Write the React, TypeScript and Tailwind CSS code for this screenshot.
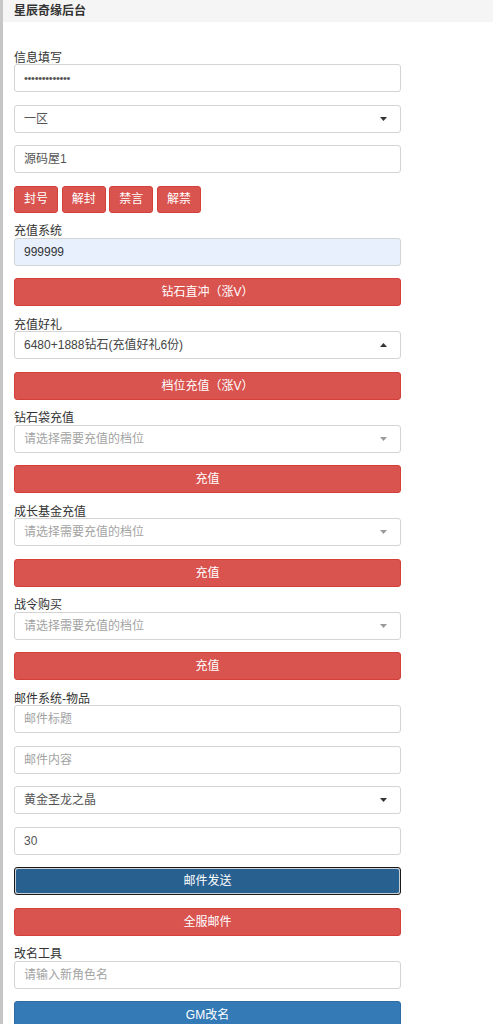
import React from "react";

const FONT = "font-['Liberation_Sans','Noto_Sans_CJK_SC',sans-serif]";

function Label({ children }: { children: React.ReactNode }) {
  return (
    <div className="mt-[12.5px] h-[12.5px] text-[12px] leading-[12px] text-[#333] whitespace-nowrap">
      {children}
    </div>
  );
}

function Field({
  children,
  muted,
  autofill,
}: {
  children: React.ReactNode;
  muted?: boolean;
  autofill?: boolean;
}) {
  return (
    <div
      className={`mt-[12.5px] first:mt-0 h-[28px] rounded-[3px] border border-[#d4d4d4] px-[9px] flex items-center text-[12px] ${
        autofill ? "bg-[#e8f0fe]" : "bg-white"
      } ${muted ? "text-[#a3a3a3]" : "text-[#555]"}`}
    >
      {children}
    </div>
  );
}

function Caret({ up, muted }: { up?: boolean; muted?: boolean }) {
  return (
    <svg width="7" height="4" viewBox="0 0 7 4" className="ml-auto mr-[4px]">
      <path
        d={up ? "M0 4 L3.5 0 L7 4 Z" : "M0 0 L7 0 L3.5 4 Z"}
        fill={muted ? "#9a9a9a" : "#333"}
      />
    </svg>
  );
}

function Select({
  text,
  muted,
  up,
}: {
  text: string;
  muted?: boolean;
  up?: boolean;
}) {
  return (
    <Field muted={muted}>
      <span>{text}</span>
      <Caret up={up} muted={muted} />
    </Field>
  );
}

function RedButton({ children }: { children: React.ReactNode }) {
  return (
    <div className="mt-[12.5px] h-[28px] rounded-[3px] bg-[#d9534f] border border-[#d43f3a] flex items-center justify-center text-white text-[12px]">
      {children}
    </div>
  );
}

export default function App() {
  return (
    <div className={`${FONT} min-h-[1024px] bg-white border-l-[3px] border-[#c6c6c6]`}>
      <div className="h-[22px] bg-[#f5f5f5] pl-[11px] flex items-center text-[12px] font-bold text-[#333]">
        星辰奇缘后台
      </div>
      <div className="pl-[11px] pt-[17px] w-[398px] flex flex-col">
        <Label>信息填写</Label>
        <div className="mt-0 h-[28px] rounded-[3px] border border-[#d4d4d4] px-[9px] flex items-center text-[11px] text-[#555] tracking-[-0.3px]">
          •••••••••••••
        </div>
        <Select text="一区" />
        <Field>源码屋1</Field>
        <div className="mt-[12.5px] flex gap-[3.67px]">
          {["封号", "解封", "禁言", "解禁"].map((t) => (
            <div
              key={t}
              className="w-[44px] h-[27px] rounded-[3px] bg-[#d9534f] border border-[#d43f3a] flex items-center justify-center text-white text-[12px]"
            >
              {t}
            </div>
          ))}
        </div>

        <Label>充值系统</Label>
        <div className="h-[28px] rounded-[3px] border border-[#d4d4d4] bg-[#e8f0fe] px-[9px] flex items-center text-[12px] text-[#333]">
          999999
        </div>
        <RedButton>钻石直冲（涨V）</RedButton>

        <Label>充值好礼</Label>
        <div className="h-[28px] rounded-[3px] border border-[#d4d4d4] px-[9px] flex items-center text-[12px] text-[#444]">
          <span>6480+1888钻石(充值好礼6份)</span>
          <Caret up />
        </div>
        <RedButton>档位充值（涨V）</RedButton>

        <Label>钻石袋充值</Label>
        <div className="h-[28px] rounded-[3px] border border-[#d4d4d4] px-[9px] flex items-center text-[12px] text-[#a3a3a3]">
          <span>请选择需要充值的档位</span>
          <Caret muted />
        </div>
        <RedButton>充值</RedButton>

        <Label>成长基金充值</Label>
        <div className="h-[28px] rounded-[3px] border border-[#d4d4d4] px-[9px] flex items-center text-[12px] text-[#a3a3a3]">
          <span>请选择需要充值的档位</span>
          <Caret muted />
        </div>
        <RedButton>充值</RedButton>

        <Label>战令购买</Label>
        <div className="h-[28px] rounded-[3px] border border-[#d4d4d4] px-[9px] flex items-center text-[12px] text-[#a3a3a3]">
          <span>请选择需要充值的档位</span>
          <Caret muted />
        </div>
        <RedButton>充值</RedButton>

        <Label>邮件系统-物品</Label>
        <div className="h-[28px] rounded-[3px] border border-[#d4d4d4] px-[9px] flex items-center text-[12px] text-[#a3a3a3]">
          邮件标题
        </div>
        <Field muted>邮件内容</Field>
        <Select text="黄金圣龙之晶" />
        <Field>30</Field>
        <div className="mt-[12.5px] h-[28px] rounded-[3px] border border-[#1a1a1a] p-[1px] bg-[#c8d0d8]">
          <div className="h-full rounded-[2px] bg-[#286090] flex items-center justify-center text-white text-[12px]">
            邮件发送
          </div>
        </div>
        <RedButton>全服邮件</RedButton>

        <Label>改名工具</Label>
        <div className="h-[28px] rounded-[3px] border border-[#d4d4d4] px-[9px] flex items-center text-[12px] text-[#a3a3a3]">
          请输入新角色名
        </div>
        <div className="mt-[12.5px] h-[28px] rounded-[3px] bg-[#337ab7] border border-[#2e6da4] flex items-center justify-center text-white text-[12px]">
          GM改名
        </div>
      </div>
    </div>
  );
}
